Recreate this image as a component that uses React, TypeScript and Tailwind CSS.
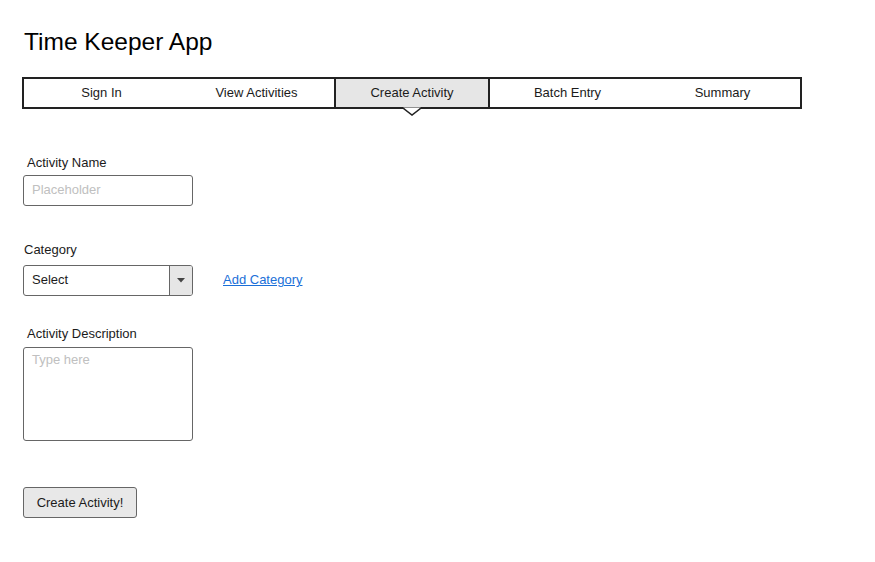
import React from "react";

const tabs = ["Sign In", "View Activities", "Create Activity", "Batch Entry", "Summary"];

export default function App() {
  return (
    <div
      className="w-[875px] h-[562px] bg-white text-[#1b1b1b] overflow-hidden"
      style={{ fontFamily: '"Liberation Sans", Arial, sans-serif' }}
    >
      <div className="pl-[24px] pt-[28px] text-[24.5px] leading-[28px] text-black">Time Keeper App</div>

      <div className="ml-[22px] mt-[21px] w-[780px] h-[32px] border-2 border-[#222] flex relative">
        {tabs.map((t, i) => {
          const active = i === 2;
          return (
            <div
              key={t}
              className={
                active
                  ? "w-[157px] h-full flex items-center justify-center text-[13px] bg-[#e6e6e6] border-x-2 border-[#222] relative"
                  : "w-[156px] h-full flex items-center justify-center text-[13px]"
              }
            >
              {t}
              {active && (
                <svg
                  className="absolute left-1/2 -translate-x-1/2 top-[28px]"
                  width="18"
                  height="9"
                  viewBox="0 0 18 9"
                >
                  <polygon points="0,0.5 9,8 18,0.5" fill="#ffffff" />
                  <polyline points="0,1 9,8 18,1" fill="none" stroke="#222" strokeWidth="1.5" />
                </svg>
              )}
            </div>
          );
        })}
      </div>

      <div className="pl-[23px]">
        <div className="mt-[46px] pl-[4px] text-[13px] leading-[16px]">Activity Name</div>
        <div className="mt-[4px] w-[170px] h-[31px] border border-[#666] rounded-[3px] flex items-center pl-[8px] pb-[2px] text-[13px] text-[#c0c0c0]">
          Placeholder
        </div>

        <div className="mt-[36px] pl-[1px] text-[13px] leading-[16px]">Category</div>
        <div className="mt-[7px] flex items-center">
          <div className="w-[170px] h-[31px] border border-[#666] rounded-[3px] flex overflow-hidden">
            <div className="flex-1 flex items-center pl-[8px] pb-[1px] text-[13px]">Select</div>
            <div className="w-[23px] h-full bg-[#e6e6e6] border-l border-[#666] flex items-center justify-center">
              <svg width="8" height="5" viewBox="0 0 8 5">
                <polygon points="0,0 8,0 4,4.5" fill="#444" />
              </svg>
            </div>
          </div>
          <a className="ml-[30px] pb-[1px] text-[13px] text-[#1a6fd8] underline cursor-pointer">Add Category</a>
        </div>

        <div className="mt-[30px] pl-[4px] text-[13px] leading-[16px]">Activity Description</div>
        <div className="mt-[5px] w-[170px] h-[94px] border border-[#666] rounded-[3px] pl-[8px] pt-[2px] text-[13px] text-[#c0c0c0]">
          Type here
        </div>

        <div className="mt-[46px] w-[114px] h-[31px] border border-[#666] rounded-[3px] bg-[#e8e8e8] flex items-center justify-center text-[13px]">
          Create Activity!
        </div>
      </div>
    </div>
  );
}
